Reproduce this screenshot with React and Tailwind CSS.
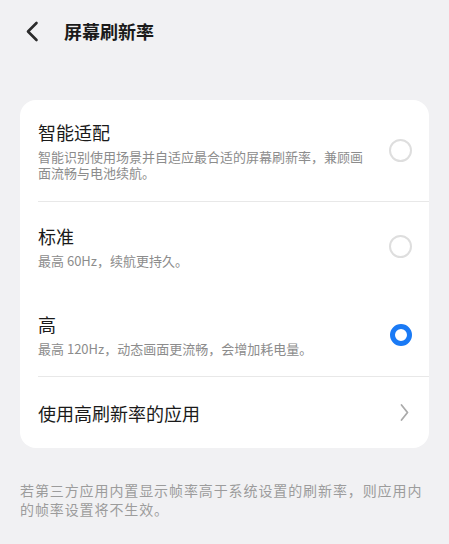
import React, { useState } from "react";

const options = [
  {
    key: "auto",
    title: "智能适配",
    desc: "智能识别使用场景并自适应最合适的屏幕刷新率，兼顾画面流畅与电池续航。",
    pad: "pt-5 pb-5",
  },
  {
    key: "standard",
    title: "标准",
    desc: "最高 60Hz，续航更持久。",
    pad: "pt-[22px] pb-[22px]",
  },
  {
    key: "high",
    title: "高",
    desc: "最高 120Hz，动态画面更流畅，会增加耗电量。",
    pad: "pt-[21px] pb-[19px]",
  },
];

const Radio = ({ checked }) =>
  checked ? (
    <span className="w-[22px] h-[22px] rounded-full border-[5px] border-[#1a7af5] shrink-0" />
  ) : (
    <span className="w-[23px] h-[23px] rounded-full border-2 border-[#dedede] shrink-0" />
  );

const App = () => {
  const [selected, setSelected] = useState("high");

  return (
    <div className="min-h-[544px] bg-[#f1f1f3] font-['Noto_Sans_CJK_SC','Noto_Sans',sans-serif]">
      {/* header */}
      <div className="flex items-center h-[62px] pl-[25px]">
        <svg width="14" height="21" viewBox="0 0 14 21" className="shrink-0">
          <path
            d="M11.5 2 L3 10.5 L11.5 19"
            fill="none"
            stroke="#2b2b2b"
            strokeWidth="2.6"
            strokeLinecap="round"
            strokeLinejoin="round"
          />
        </svg>
        <p className="ml-[25px] text-[18px] font-semibold text-[#1a1a1a] leading-6">
          屏幕刷新率
        </p>
      </div>

      <div className="mx-5 mt-[38px] bg-white rounded-2xl overflow-hidden">
        {options.map((opt, i) => (
          <div key={opt.key}>
            <div
              onClick={() => setSelected(opt.key)}
              className={`flex items-center pl-[18px] pr-[17px] ${opt.pad} cursor-pointer`}
            >
              <div className="flex-1">
                <p className="text-[18px] leading-6 text-[#1a1a1a]">
                  {opt.title}
                </p>
                <p className="mt-[5px] w-[334px] text-[13px] leading-4 text-[#8c8c8c]">
                  {opt.desc}
                </p>
              </div>
              <Radio checked={selected === opt.key} />
            </div>
            {(i === 0 || i === 2) && (
              <div className="ml-[18px] h-px bg-[#e8e8e8]" />
            )}
          </div>
        ))}
        <div className="flex items-center justify-between h-[71px] pl-[18px] pr-5">
          <p className="text-[18px] leading-6 text-[#1a1a1a]">使用高刷新率的应用</p>
          <svg width="9" height="19" viewBox="0 0 9 19">
            <path
              d="M1.5 2 L7.5 9.5 L1.5 17"
              fill="none"
              stroke="#ababab"
              strokeWidth="1.8"
              strokeLinecap="round"
              strokeLinejoin="round"
            />
          </svg>
        </div>
      </div>

      <p className="mx-5 mt-[33px] text-[14px] tracking-[0.9px] leading-[19px] text-[#9c9c9c]">
        若第三方应用内置显示帧率高于系统设置的刷新率，则应用内的帧率设置将不生效。
      </p>
    </div>
  );
};

export default App;
